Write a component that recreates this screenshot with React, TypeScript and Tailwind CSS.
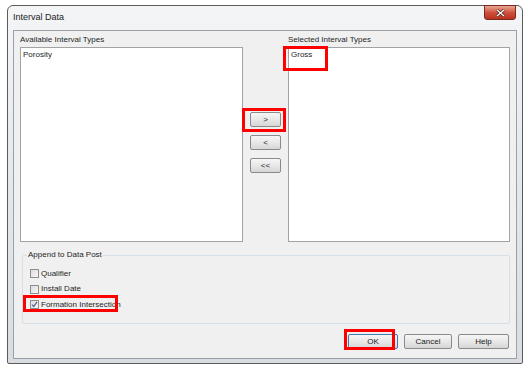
import React from 'react'

const font = { fontFamily: '"Liberation Sans", Arial, sans-serif' }

const WinButton: React.FC<{ label: string; w: string; primary?: boolean }> = ({ label, w, primary }) => (
    <div
        className={`${w} h-[15px] flex items-center justify-center rounded-[2px] border text-[8px] leading-none text-[#1a1a1a] bg-linear-to-b from-[#f6f6f6] via-[#e8e8e8] to-[#d6d6d6] ${
            primary ? 'border-[#3d7bad]' : 'border-[#8a8a8a]'
        }`}
    >
        {label}
    </div>
)

const Check: React.FC<{ label: string; checked?: boolean }> = ({ label, checked }) => (
    <div className="flex items-center h-[15.5px] gap-[2px]">
        <div className="w-[9px] h-[9px] border border-[#8e8f8f] bg-linear-to-br from-[#dcdcdc] to-[#f8f8f8] flex items-center justify-center">
            {checked && (
                <svg width="7" height="7" viewBox="0 0 7 7">
                    <path d="M1 3.6 L2.8 5.6 L6 0.8" fill="none" stroke="#4b5c93" strokeWidth="1.2" />
                </svg>
            )}
        </div>
        <span className="text-[8px] leading-none text-[#1e1e1e]">{label}</span>
    </div>
)

export default function App() {
    return (
        <div className="relative w-[528px] h-[371px] overflow-hidden bg-white pt-[5px] pl-[7px]" style={font}>
            <div className="w-[516px] h-[359px] border border-[#5b5b5b] rounded-t-[6px] rounded-b-[2px] bg-linear-to-b from-[#f3f5f7] via-[#e4e7eb] to-[#d9dde2] flex flex-col px-[5px] pb-[4px]">
                {/* title bar */}
                <div className="h-[24px] flex items-start justify-between">
                    <span className="text-[9px] leading-none text-[#1b1b1b] mt-[7px]">Interval Data</span>
                    <div className="w-[32px] h-[15px] -mt-[1px] mr-[1px] rounded-b-[3px] border border-[#7a2a1f] bg-linear-to-b from-[#e8a595] via-[#d0523e] to-[#b8321f] flex items-center justify-center">
                        <svg width="9" height="8" viewBox="0 0 9 8">
                            <path d="M1 1 L8 7 M8 1 L1 7" stroke="#3a1a14" strokeWidth="2.6" />
                            <path d="M1 1 L8 7 M8 1 L1 7" stroke="#ffffff" strokeWidth="1.4" />
                        </svg>
                    </div>
                </div>

                {/* client area */}
                <div className="flex-1 bg-[#f0f0f0] border border-[#9aa0a6] px-[6px] pt-[4px] pb-[9px] flex flex-col">
                    <div className="grid grid-cols-[223px_45px_222px]">
                        <div className="flex flex-col">
                            <span className="text-[8px] leading-[10px] text-[#1e1e1e] mb-[2px]">Available Interval Types</span>
                            <div className="h-[195px] bg-white border border-[#a3a3a3] px-[2px] pt-[2px]">
                                <div className="text-[8px] leading-[10px] text-[#1e1e1e]">Porosity</div>
                            </div>
                        </div>
                        <div className="flex flex-col items-center pt-[77px] gap-[8px]">
                            <WinButton label=">" w="w-[31px]" />
                            <WinButton label="<" w="w-[31px]" />
                            <WinButton label="<<" w="w-[31px]" />
                        </div>
                        <div className="flex flex-col">
                            <span className="text-[8px] leading-[10px] text-[#1e1e1e] mb-[2px]">Selected Interval Types</span>
                            <div className="h-[195px] bg-white border border-[#a3a3a3] px-[2px] pt-[2px]">
                                <div className="text-[8px] leading-[10px] text-[#1e1e1e]">Gross</div>
                            </div>
                        </div>
                    </div>

                    <fieldset className="mt-[8px] ml-[2px] w-[488px] border border-[#d5dfe5] rounded-[2px] pl-[7px] pt-[6px] pb-[10px]">
                        <legend className="-ml-[3px] px-[1px] text-[8px] leading-[10px] text-[#1e1e1e]">Append to Data Post</legend>
                        <Check label="Qualifier" />
                        <Check label="Install Date" />
                        <Check label="Formation Intersection" checked />
                    </fieldset>

                    <div className="mt-auto flex justify-end gap-[6px] pr-[1px]">
                        <WinButton label="OK" w="w-[50px]" primary />
                        <WinButton label="Cancel" w="w-[48px]" />
                        <WinButton label="Help" w="w-[51px]" />
                    </div>
                </div>
            </div>

            {/* red annotation boxes */}
            <div className="absolute left-[283px] top-[46px] w-[45px] h-[25px] border-[3px] border-[#ff0000]" />
            <div className="absolute left-[242px] top-[108px] w-[44px] h-[24px] border-[3px] border-[#ff0000]" />
            <div className="absolute left-[23px] top-[295px] w-[95px] h-[17px] border-[3px] border-[#ff0000]" />
            <div className="absolute left-[344px] top-[329px] w-[51px] h-[21px] border-[3px] border-[#ff0000]" />
        </div>
    )
}
